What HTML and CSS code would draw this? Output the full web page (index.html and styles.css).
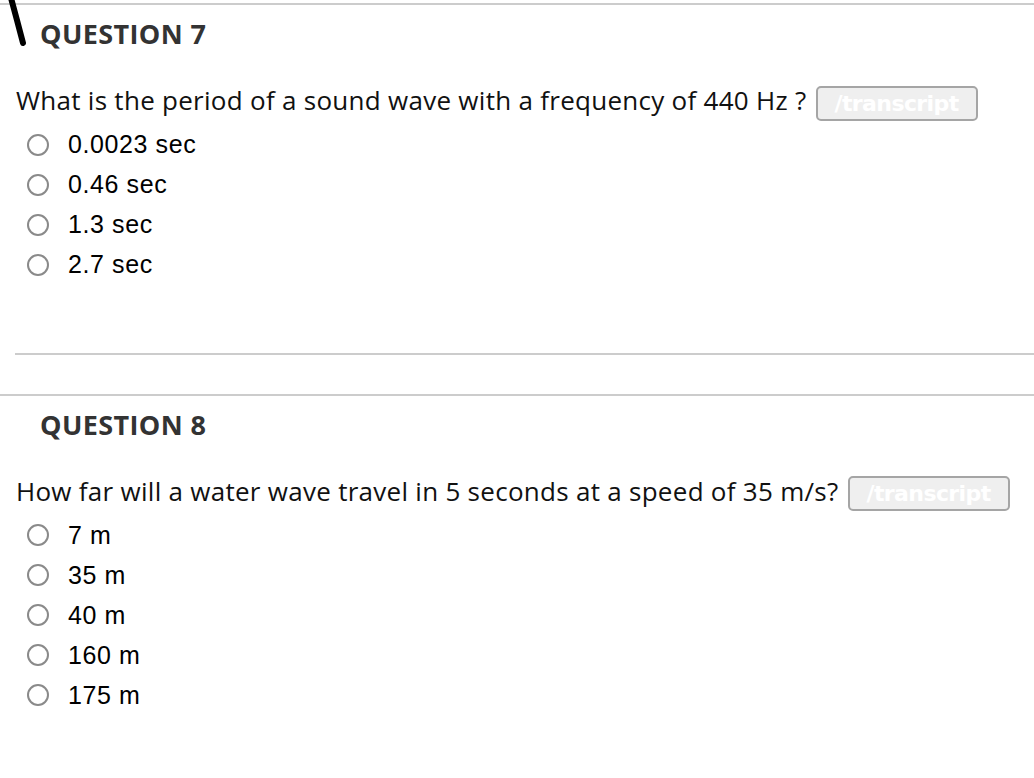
FILE: index.html
```html
<!DOCTYPE html>
<html lang="en">
<head>
    <meta charset="UTF-8">
    <meta name="viewport" content="width=device-width, initial-scale=1.0">
    <link rel="stylesheet" href="styles.css">
    <title>Quiz</title>
</head>
<body>
    <div class="question">
        <svg class="pen-mark" width="30" height="50" viewBox="0 0 30 50">
            <path d="M11 -2 Q17 20 23 43" stroke="#000" stroke-width="6" stroke-linecap="round" fill="none"/>
        </svg>
        <h2 class="q-title">QUESTION 7</h2>
        <p class="q-text">
            What is the period of a sound wave with a frequency of 440 Hz ?
            <span class="transcript">/transcript</span>
        </p>
        <ul class="options">
            <li><span class="radio"></span>0.0023 sec</li>
            <li><span class="radio"></span>0.46 sec</li>
            <li><span class="radio"></span>1.3 sec</li>
            <li><span class="radio"></span>2.7 sec</li>
        </ul>
    </div>

    <div class="divider"></div>

    <div class="question">
        <h2 class="q-title">QUESTION 8</h2>
        <p class="q-text">
            How far will a water wave travel in 5 seconds at a speed of 35 m/s?
            <span class="transcript">/transcript</span>
        </p>
        <ul class="options">
            <li><span class="radio"></span>7 m</li>
            <li><span class="radio"></span>35 m</li>
            <li><span class="radio"></span>40 m</li>
            <li><span class="radio"></span>160 m</li>
            <li><span class="radio"></span>175 m</li>
        </ul>
    </div>
</body>
</html>
```

FILE: styles.css
```css
body {
    margin: 0;
    font-family: 'Open Sans', sans-serif;
    background: #fff;
    color: #000;
}

.question {
    position: relative;
    border-top: 2px solid #cccccc;
    margin-top: 3px;
    padding-top: 14px;
}

.question + .divider + .question {
    margin-top: 39px;
}

.pen-mark {
    position: absolute;
    left: 0;
    top: -5px;
}

.q-title {
    margin: 0;
    padding-left: 40px;
    font-size: 27px;
    line-height: 30px;
    font-weight: 700;
    letter-spacing: 0.4px;
    color: #333;
}

.q-text {
    margin: 33px 0 0 0;
    padding-left: 16px;
    font-size: 26px;
    line-height: 36px;
    letter-spacing: 0.28px;
    color: #111;
}

.transcript {
    display: inline-block;
    vertical-align: middle;
    box-sizing: border-box;
    width: 162px;
    height: 35px;
    line-height: 31px;
    margin-left: 2px;
    border: 2px solid #a5a5a5;
    border-radius: 5px;
    background: #efefef;
    color: #fff;
    text-align: center;
    font-family: 'DejaVu Sans', sans-serif;
    font-weight: 700;
    font-size: 22px;
    letter-spacing: -0.6px;
}

.options {
    list-style: none;
    margin: 4px 0 0 0;
    padding: 0;
}

.options li {
    display: flex;
    align-items: center;
    height: 40px;
    font-family: 'Liberation Sans', Arial, sans-serif;
    font-size: 25px;
    letter-spacing: 0.6px;
}

.radio {
    width: 18px;
    height: 18px;
    border: 2px solid #8a8a8a;
    border-radius: 50%;
    margin-left: 27px;
    margin-right: 19px;
}

.divider {
    margin: 68px 0 0 15px;
    border-top: 2px solid #cccccc;
}
```
